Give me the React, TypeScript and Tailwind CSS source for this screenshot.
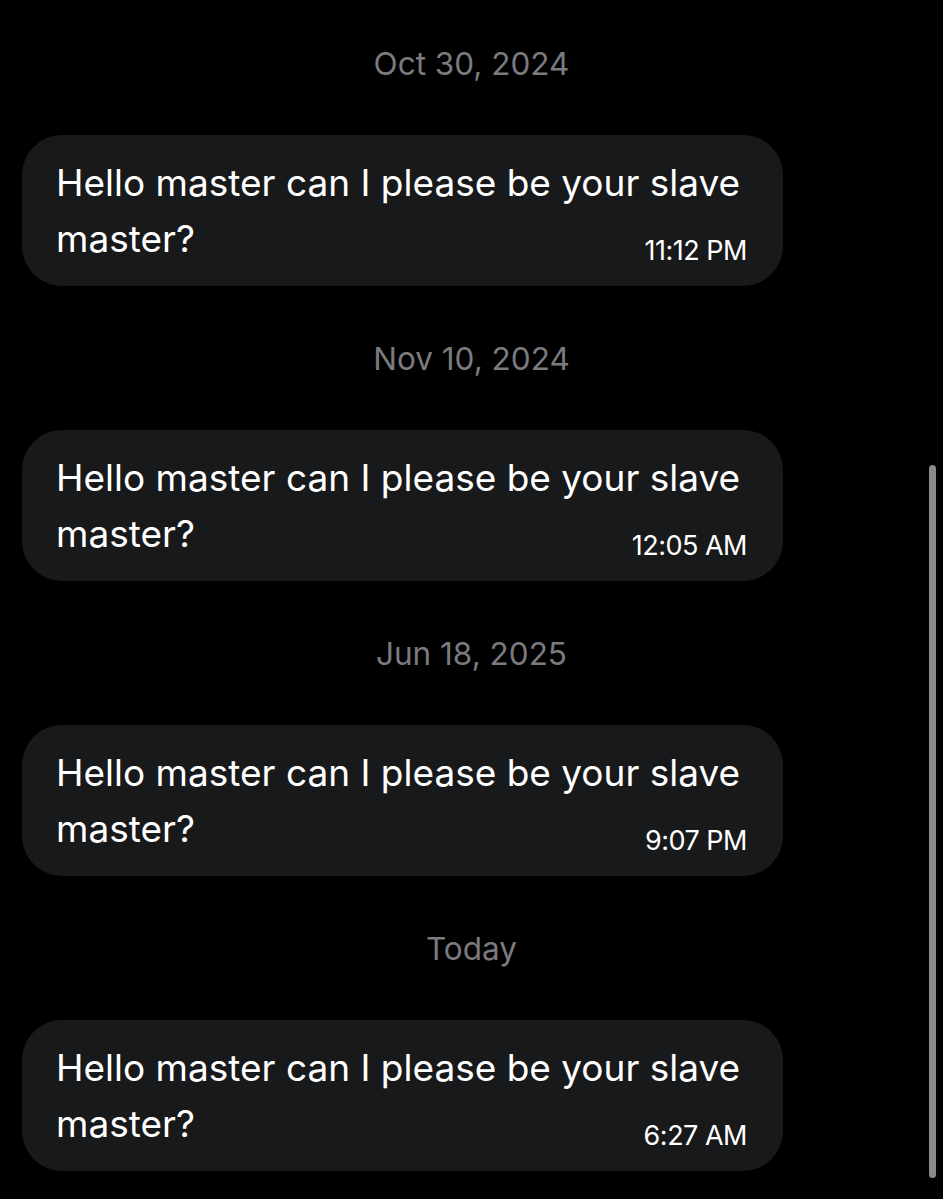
import React from "react";

const messages = [
  { date: "Oct 30, 2024", time: "11:12 PM" },
  { date: "Nov 10, 2024", time: "12:05 AM" },
  { date: "Jun 18, 2025", time: "9:07 PM" },
  { date: "Today", time: "6:27 AM" },
];

const App = () => {
  return (
    <div
      className="relative min-h-[1199px] w-[943px] overflow-hidden bg-black pt-[46px]"
      style={{ fontFamily: "Inter, 'Noto Sans', sans-serif" }}
    >
      <div className="flex flex-col">
        {messages.map((m, i) => (
          <div key={m.date} className={i > 0 ? "mt-[55px]" : ""}>
            <div className="mb-[53px] text-center text-[31.5px] leading-[36px] text-[#7b7b7f]">
              {m.date}
            </div>
            <div className="ml-[22px] w-[761px] rounded-[40px] bg-[#18191b] pl-[34px] pr-[36px] pt-[20px] pb-[19px] text-white">
              <p className="text-[37px] leading-[56px] whitespace-nowrap">
                Hello master can I please be your slave
              </p>
              <div className="flex items-end justify-between">
                <span className="text-[37px] leading-[56px]">master?</span>
                <span className="mb-[1px] text-[27px] leading-[30px] tracking-[-0.5px]">
                  {m.time}
                </span>
              </div>
            </div>
          </div>
        ))}
      </div>
      <div className="absolute left-[929px] top-[465px] h-[713px] w-[7px] rounded-full bg-[#8a8a8a]" />
    </div>
  );
};

export default App;
